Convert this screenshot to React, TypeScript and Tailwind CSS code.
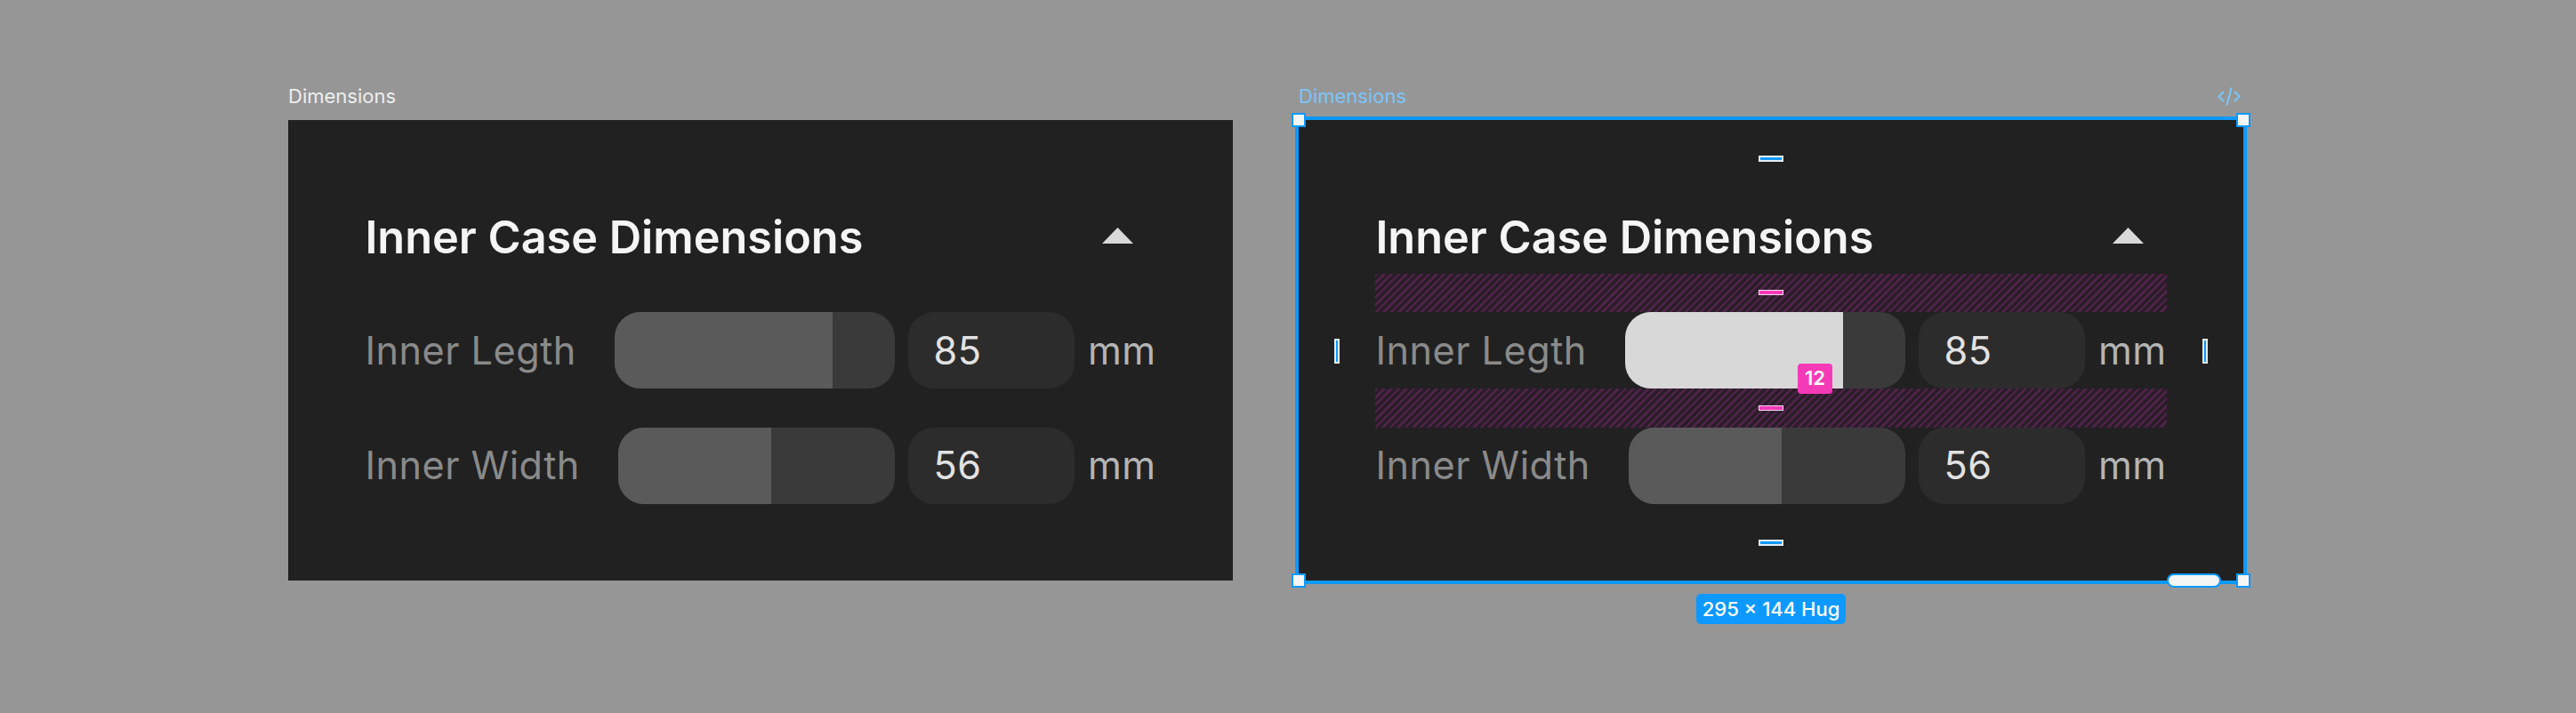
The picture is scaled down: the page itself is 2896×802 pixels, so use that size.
type Row = { label: string; value: string; fill: number };

const rows: Row[] = [
  { label: "Inner Legth", value: "85", fill: 245 },
  { label: "Inner Width", value: "56", fill: 172 },
];

function Gap({ selected }: { selected?: boolean }) {
  return selected ? (
    <div className="h-[43.2px] flex items-center justify-center bg-[repeating-linear-gradient(135deg,#4f2349_0px,#4f2349_2.5px,#2a1d29_2.5px,#2a1d29_6px)]">
      <span className="w-[28px] h-[6px] bg-[#f53ab8] border border-[#f3dcec]" />
    </div>
  ) : (
    <div className="h-[43.2px]" />
  );
}

function SliderRow({ row, active, selected }: { row: Row; active?: boolean; selected?: boolean }) {
  return (
    <div className="h-[86.4px] flex items-center">
      <span className="text-[43.2px] leading-none tracking-[0.5px] text-[#8a8a8a] mr-[43.2px]">{row.label}</span>
      <div className="flex-1 h-full flex rounded-[28.8px] bg-[#3a3a3a]">
        <div
          className={`relative h-full rounded-l-[28.8px] ${active ? "bg-[#d8d8d8]" : "bg-[#5a5a5a]"}`}
          style={{ width: row.fill }}
        >
          {active && selected && (
            <span className="absolute right-[12px] top-[58px] w-[39px] h-[34px] rounded-[4px] bg-[#f53ab8] text-white text-[22px] font-semibold flex items-center justify-center">
              12
            </span>
          )}
        </div>
      </div>
      <div className="ml-[14.4px] w-[187.2px] h-full rounded-[28.8px] bg-[#2c2c2c] flex items-center pl-[28.8px]">
        <span className="text-[43.2px] leading-none tracking-[0.5px] text-[#e2e2e2]">{row.value}</span>
      </div>
      <span className="ml-[15px] text-[43.2px] leading-none tracking-[0.5px] text-[#b4b4b4]">mm</span>
    </div>
  );
}

function Panel({ selected }: { selected?: boolean }) {
  return (
    <div className={`relative w-[1062px] bg-[#212121] p-[86.4px] ${selected ? "outline-4 outline-[#0d99ff]" : ""}`}>
      <div className="h-[86.4px] flex items-center justify-between">
        <h2 className="pt-[6px] text-[50.4px] leading-none font-semibold text-[#f5f5f5]">Inner Case Dimensions</h2>
        <div className="w-[86.4px] h-[86.4px] flex items-center justify-center">
          <svg width="35" height="18" viewBox="0 0 35 18">
            <polygon points="17.5,0 35,18 0,18" fill="#d9d9d9" />
          </svg>
        </div>
      </div>
      <Gap selected={selected} />
      <SliderRow row={rows[0]} active={selected} selected={selected} />
      <Gap selected={selected} />
      <SliderRow row={rows[1]} />

      {selected && (
        <>
          <span className="absolute left-1/2 -translate-x-1/2 top-[40px] w-[28px] h-[7px] bg-[#0d99ff] border-2 border-[#e3ecf3]" />
          <span className="absolute left-1/2 -translate-x-1/2 bottom-[39px] w-[28px] h-[7px] bg-[#0d99ff] border-2 border-[#e3ecf3]" />
          <span className="absolute left-[40px] top-[246px] w-[6px] h-[28px] bg-[#0d99ff] border-2 border-[#e3ecf3]" />
          <span className="absolute right-[40px] top-[246px] w-[6px] h-[28px] bg-[#0d99ff] border-2 border-[#e3ecf3]" />

          <span className="absolute -left-[8px] -top-[8px] w-[16px] h-[16px] bg-[#f4f5f5] border-2 border-[#0d99ff]" />
          <span className="absolute -right-[8px] -top-[8px] w-[16px] h-[16px] bg-[#f4f5f5] border-2 border-[#0d99ff]" />
          <span className="absolute -left-[8px] -bottom-[8px] w-[16px] h-[16px] bg-[#f4f5f5] border-2 border-[#0d99ff]" />
          <span className="absolute -right-[8px] -bottom-[8px] w-[16px] h-[16px] bg-[#f4f5f5] border-2 border-[#0d99ff]" />
          <span className="absolute right-[25px] -bottom-[8px] w-[61px] h-[16px] rounded-full bg-[#f4f5f5] border-2 border-[#0d99ff]" />
        </>
      )}
    </div>
  );
}

export default function App() {
  return (
    <div className="w-[2896px] h-[802px] bg-[#969696] flex items-start pl-[324px] pt-[95px] gap-[74px] font-['Inter',sans-serif]">
      <div className="flex flex-col">
        <p className="h-[26px] leading-[26px] text-[22px] text-[#eeeeee]">Dimensions</p>
        <div className="mt-[14px]">
          <Panel />
        </div>
      </div>

      <div className="flex flex-col items-center">
        <div className="w-full h-[26px] flex items-center justify-between">
          <p className="leading-[26px] text-[22px] text-[#7cc5f9]">Dimensions</p>
          <svg width="26" height="21" viewBox="0 0 26 21" fill="none" stroke="#7cc5f9" strokeWidth="2" className="mr-[3px]">
            <polyline points="7,5 1.5,10.5 7,16" />
            <line x1="10.5" y1="20.5" x2="15.5" y2="0.5" />
            <polyline points="19,5 24.5,10.5 19,16" />
          </svg>
        </div>
        <div className="mt-[14px]">
          <Panel selected />
        </div>
        <span className="mt-[15px] h-[34px] px-[7px] rounded-[5px] bg-[#0d99ff] text-white text-[22px] font-medium flex items-center">
          295 × 144 Hug
        </span>
      </div>
    </div>
  );
}
